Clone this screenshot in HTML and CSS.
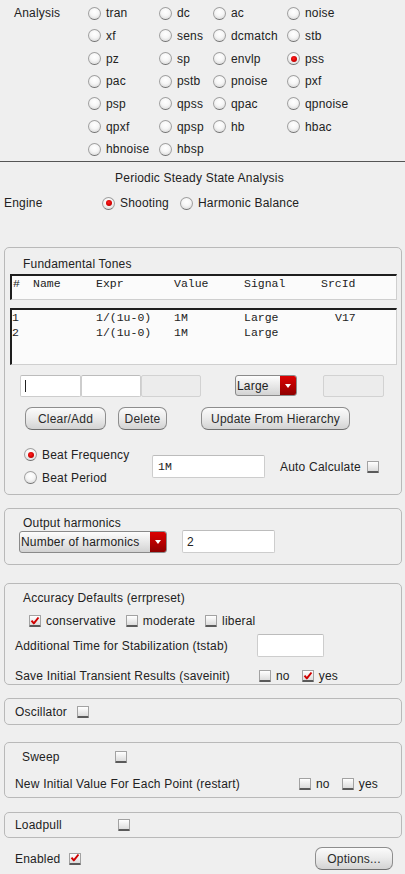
FILE: index.html
```html
<!DOCTYPE html>
<html>
<head>
<meta charset="utf-8">
<link rel="stylesheet" href="styles.css">
</head>
<body>
<div class="analysis">
  <div class="analysis-label">Analysis</div>
  <div class="radio-grid">
    <div class="opt"><span class="radio"></span>tran</div>
    <div class="opt"><span class="radio"></span>dc</div>
    <div class="opt"><span class="radio"></span>ac</div>
    <div class="opt"><span class="radio"></span>noise</div>
    <div class="opt"><span class="radio"></span>xf</div>
    <div class="opt"><span class="radio"></span>sens</div>
    <div class="opt"><span class="radio"></span>dcmatch</div>
    <div class="opt"><span class="radio"></span>stb</div>
    <div class="opt"><span class="radio"></span>pz</div>
    <div class="opt"><span class="radio"></span>sp</div>
    <div class="opt"><span class="radio"></span>envlp</div>
    <div class="opt"><span class="radio on"></span>pss</div>
    <div class="opt"><span class="radio"></span>pac</div>
    <div class="opt"><span class="radio"></span>pstb</div>
    <div class="opt"><span class="radio"></span>pnoise</div>
    <div class="opt"><span class="radio"></span>pxf</div>
    <div class="opt"><span class="radio"></span>psp</div>
    <div class="opt"><span class="radio"></span>qpss</div>
    <div class="opt"><span class="radio"></span>qpac</div>
    <div class="opt"><span class="radio"></span>qpnoise</div>
    <div class="opt"><span class="radio"></span>qpxf</div>
    <div class="opt"><span class="radio"></span>qpsp</div>
    <div class="opt"><span class="radio"></span>hb</div>
    <div class="opt"><span class="radio"></span>hbac</div>
    <div class="opt"><span class="radio"></span>hbnoise</div>
    <div class="opt"><span class="radio"></span>hbsp</div>
  </div>
</div>

<div class="page-title">Periodic Steady State Analysis</div>

<div class="engine-row">
  <div class="engine-label">Engine</div>
  <div class="opt"><span class="radio on"></span>Shooting</div>
  <div class="opt engine-hb"><span class="radio"></span>Harmonic Balance</div>
</div>

<div class="group tones">
  <div class="group-title">Fundamental Tones</div>
  <div class="table-head mono">
    <span>#</span><span>Name</span><span>Expr</span><span>Value</span><span>Signal</span><span>SrcId</span>
  </div>
  <div class="table-body mono">
    <div class="trow"><span>1</span><span></span><span>1/(1u-0)</span><span>1M</span><span>Large</span><span class="src">V17</span></div>
    <div class="trow"><span>2</span><span></span><span>1/(1u-0)</span><span>1M</span><span>Large</span><span class="src"></span></div>
  </div>
  <div class="edit-row">
    <div class="field f-name"><span class="caret"></span></div>
    <div class="field f-expr"></div>
    <div class="field f-val disabled"></div>
    <div class="dropdown dd-signal"><span class="dd-val">Large</span><span class="dd-arrow"><span class="tri"></span></span></div>
    <div class="field f-src disabled"></div>
  </div>
  <div class="btn-row">
    <div class="btn b-clear">Clear/Add</div>
    <div class="btn b-delete">Delete</div>
    <div class="btn b-update">Update From Hierarchy</div>
  </div>
  <div class="beat-row">
    <div class="beat-radios">
      <div class="opt beat-opt"><span class="radio on"></span>Beat Frequency</div>
      <div class="opt beat-opt"><span class="radio"></span>Beat Period</div>
    </div>
    <div class="field f-beat mono">1M</div>
    <div class="auto">Auto Calculate<span class="check"></span></div>
  </div>
</div>

<div class="group harm">
  <div class="group-title">Output harmonics</div>
  <div class="harm-row">
    <div class="dropdown dd-harm"><span class="dd-val">Number of harmonics</span><span class="dd-arrow"><span class="tri"></span></span></div>
    <div class="field f-harm">2</div>
  </div>
</div>

<div class="group acc">
  <div class="group-title">Accuracy Defaults (errpreset)</div>
  <div class="acc-checks">
    <div class="copt"><span class="check on"><svg viewBox="0 0 12 12" width="10" height="10"><path d="M1.8 5.6 L4.6 8.8 L10.2 1.8" fill="none" stroke="#d00000" stroke-width="2.4" stroke-linejoin="round"/></svg></span>conservative</div>
    <div class="copt"><span class="check"></span>moderate</div>
    <div class="copt"><span class="check"></span>liberal</div>
  </div>
  <div class="acc-row tstab">
    <div class="row-label tstab-label">Additional Time for Stabilization (tstab)</div>
    <div class="field f-tstab"></div>
  </div>
  <div class="acc-row saveinit">
    <div class="row-label save-label">Save Initial Transient Results (saveinit)</div>
    <div class="copt"><span class="check"></span>no</div>
    <div class="copt"><span class="check on"><svg viewBox="0 0 12 12" width="10" height="10"><path d="M1.8 5.6 L4.6 8.8 L10.2 1.8" fill="none" stroke="#d00000" stroke-width="2.4" stroke-linejoin="round"/></svg></span>yes</div>
  </div>
</div>

<div class="group osc">
  <div class="osc-row">Oscillator<span class="check"></span></div>
</div>

<div class="group sweep">
  <div class="sweep-row"><span class="sweep-label">Sweep</span><span class="check"></span></div>
  <div class="restart-row">
    <div class="row-label restart-label">New Initial Value For Each Point (restart)</div>
    <div class="copt"><span class="check"></span>no</div>
    <div class="copt"><span class="check"></span>yes</div>
  </div>
</div>

<div class="group loadpull">
  <div class="lp-row"><span class="lp-label">Loadpull</span><span class="check"></span></div>
</div>

<div class="enabled-row">
  <div class="enabled">Enabled<span class="check on"><svg viewBox="0 0 12 12" width="10" height="10"><path d="M1.8 5.6 L4.6 8.8 L10.2 1.8" fill="none" stroke="#d00000" stroke-width="2.4" stroke-linejoin="round"/></svg></span></div>
  <div class="btn b-options">Options...</div>
</div>
</body>
</html>
```

FILE: styles.css
```css
html, body {
  margin: 0;
  padding: 0;
  background: #efefef;
}
body {
  width: 405px;
  height: 874px;
  overflow: hidden;
  font-family: "Liberation Sans", Arial, sans-serif;
  font-size: 12px;
  line-height: 14px;
  letter-spacing: 0.2px;
  color: #222;
}
.mono {
  font-family: "Liberation Mono", "DejaVu Sans Mono", monospace;
  font-size: 11.5px;
  letter-spacing: 0;
}

/* radio & checkbox */
.opt {
  display: flex;
  align-items: center;
  white-space: nowrap;
}
.radio {
  flex: none;
  box-sizing: border-box;
  width: 13px;
  height: 13px;
  border-radius: 50%;
  border: 1px solid #a0a0a0;
  border-bottom-color: #707070;
  background: radial-gradient(circle at 50% 35%, #ffffff 0%, #f6f6f6 45%, #cfcfcf 100%);
  margin-right: 5px;
  display: flex;
  align-items: center;
  justify-content: center;
}
.radio.on::after {
  content: "";
  width: 6px;
  height: 6px;
  border-radius: 50%;
  background: radial-gradient(circle at 45% 40%, #ff2020 0%, #d00000 60%, #8a0000 100%);
}
.check {
  flex: none;
  box-sizing: border-box;
  width: 12px;
  height: 12px;
  border: 1px solid #a2a2a2;
  border-bottom: 2px solid #5a5a5a;
  border-radius: 1px;
  background: linear-gradient(#ffffff, #dcdcdc);
  display: inline-flex;
  align-items: center;
  justify-content: center;
}
.check svg { display: block; }
.copt {
  display: flex;
  align-items: center;
  white-space: nowrap;
}
.copt .check { margin-right: 5px; }

/* analysis */
.analysis {
  display: flex;
  padding: 2px 0 0 14px;
  height: 159px;
  border-bottom: 1px solid #555;
}
.analysis-label {
  width: 74px;
  height: 22.67px;
  line-height: 22.67px;
}
.radio-grid {
  display: grid;
  grid-template-columns: 71px 54px 74px auto;
  grid-auto-rows: 22.67px;
}

.page-title {
  margin-top: 9px;
  text-align: center;
  padding-right: 6px;
}
.engine-row {
  display: flex;
  align-items: center;
  margin-top: 11px;
  height: 14px;
}
.engine-label {
  width: 98px;
  padding-left: 4px;
}
.engine-hb { margin-left: 11px; }

/* groups */
.group {
  margin: 0 3px 0 4px;
  border: 1px solid #b9b9b9;
  border-radius: 5px;
  box-sizing: border-box;
}
.group-title {
  margin-left: 13px;
}

.tones {
  margin-top: 37px;
  padding: 9px 4px 0 5px;
  height: 248px;
}
.table-head {
  margin-top: 3px;
  height: 26px;
  box-sizing: border-box;
  background: #fbfbfb;
  border-top: 2px solid #1e1e1e;
  border-left: 2px solid #1e1e1e;
  border-right: 1px solid #cfcfcf;
  border-bottom: 1px solid #cfcfcf;
  display: grid;
  grid-template-columns: 20px 63px 78px 70px 77px 1fr;
  padding: 1px 0 0 1px;
  line-height: 14px;
}
.table-body {
  margin-top: 8px;
  height: 57px;
  box-sizing: border-box;
  background: #fbfbfb;
  border-top: 2px solid #1e1e1e;
  border-left: 2px solid #1e1e1e;
  border-right: 1px solid #cfcfcf;
  border-bottom: 1px solid #cfcfcf;
}
.trow {
  display: grid;
  grid-template-columns: 21px 63px 78px 70px 77px 1fr;
  line-height: 15px;
}
.trow .src { padding-left: 14px; }

.field {
  box-sizing: border-box;
  background: #fff;
  border: 1px solid #cdcdcd;
  border-top-color: #bcbcbc;
  border-radius: 2px;
  height: 23px;
  display: flex;
  align-items: center;
}
.field.disabled {
  background: #ececec;
  border-color: #d2d2d2;
}
.edit-row {
  display: flex;
  align-items: flex-start;
  margin-top: 10px;
  height: 22px;
}
.edit-row .field { height: 22px; }
.f-name { margin-left: 10px; width: 61px; }
.f-expr { width: 60px; }
.f-val { width: 60px; }
.caret {
  width: 1px;
  height: 12px;
  background: #222;
  margin-left: 4px;
}
.dropdown {
  box-sizing: border-box;
  display: flex;
  border: 1px solid #8a8a8a;
  border-radius: 3px;
  background: linear-gradient(#fdfdfd, #e0e0e0 70%, #d2d2d2);
  overflow: hidden;
}
.dd-val {
  flex: 1;
  padding-left: 1px;
  display: flex;
  align-items: center;
  white-space: nowrap;
}
.dd-arrow {
  width: 16px;
  background: linear-gradient(#dc0000, #b00000 60%, #8e0000);
  display: flex;
  align-items: center;
  justify-content: center;
}
.tri {
  width: 0;
  height: 0;
  border-left: 3.5px solid transparent;
  border-right: 3.5px solid transparent;
  border-top: 4px solid #fff;
}
.dd-signal {
  margin-left: 34px;
  width: 62px;
  height: 21px;
}
.f-src { margin-left: 26px; width: 61px; }

.btn-row {
  display: flex;
  margin-top: 10px;
}
.btn {
  box-sizing: border-box;
  height: 23px;
  border: 1px solid #8e8e8e;
  border-bottom-color: #6f6f6f;
  border-radius: 7px;
  background: linear-gradient(#fbfbfb, #ececec 45%, #d3d3d3);
  display: flex;
  align-items: center;
  justify-content: center;
  white-space: nowrap;
  color: #2a2a2a;
}
.b-clear { margin-left: 15px; width: 81px; }
.b-delete { margin-left: 12px; width: 49px; }
.b-update { margin-left: 34px; width: 149px; }

.beat-row {
  display: flex;
  align-items: center;
  margin-top: 13px;
}
.beat-radios {
  margin-left: 14px;
  width: 128px;
}
.beat-opt { height: 23px; }
.f-beat {
  width: 113px;
  padding-left: 5px;
  align-self: flex-start;
  margin-top: 12px;
}
.auto {
  display: flex;
  align-items: center;
  margin-left: 15px;
  margin-top: 2px;
}
.auto .check { margin-left: 6px; }

.harm {
  margin-top: 13px;
  height: 57px;
  padding: 7px 0 0 5px;
}
.harm-row {
  display: flex;
  align-items: center;
  margin-left: 9px;
}
.dd-harm { width: 148px; height: 22px; }
.f-harm {
  margin-left: 15px;
  width: 93px;
  padding-left: 4px;
}

.acc {
  margin-top: 18px;
  height: 102px;
  padding: 7px 0 0 5px;
}
.acc-checks {
  display: flex;
  margin: 9px 0 0 19px;
}
.acc-checks .copt { margin-right: 10px; }
.acc-row {
  display: flex;
  align-items: center;
  margin-left: 5px;
}
.tstab { margin-top: 6px; }
.tstab-label { width: 242px; }
.f-tstab { width: 67px; }
.saveinit { margin-top: 12px; }
.save-label { width: 244px; }
.saveinit .copt { margin-right: 12px; }

.osc {
  margin-top: 13px;
  height: 27px;
}
.osc-row {
  height: 25px;
  display: flex;
  align-items: center;
  padding-left: 10px;
}
.osc-row .check { margin-left: 10px; }

.sweep {
  margin-top: 17px;
  height: 56px;
  padding: 7px 0 0 5px;
}
.sweep-row {
  display: flex;
  align-items: center;
  margin-left: 12px;
  height: 14px;
}
.sweep-label { width: 93px; }
.restart-row {
  display: flex;
  align-items: center;
  margin: 13px 0 0 5px;
}
.restart-label { width: 284px; }
.restart-row .copt { margin-right: 12px; }

.loadpull {
  margin-top: 14px;
  height: 26px;
}
.lp-row {
  height: 24px;
  display: flex;
  align-items: center;
  padding-left: 10px;
}
.lp-label { width: 103px; }

.enabled-row {
  display: flex;
  align-items: center;
  justify-content: space-between;
  margin: 9px 12px 0 15px;
}
.enabled {
  display: flex;
  align-items: center;
}
.enabled .check { margin-left: 9px; }
.b-options { width: 78px; }
```
